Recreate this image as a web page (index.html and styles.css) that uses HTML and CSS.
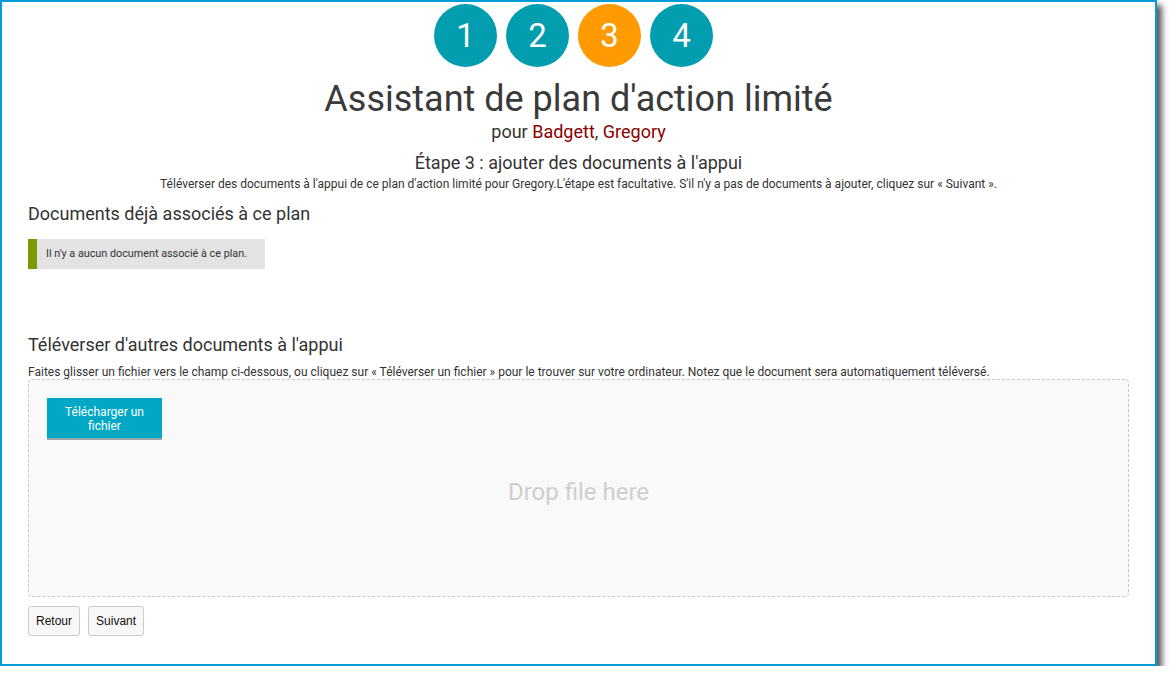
FILE: index.html
```html
<!DOCTYPE html>
<html lang="fr">
<head>
<meta charset="utf-8">
<link rel="stylesheet" href="styles.css">
</head>
<body>
<div class="frame">
  <div class="steps">
    <div class="step">1</div>
    <div class="step">2</div>
    <div class="step current">3</div>
    <div class="step">4</div>
  </div>
  <h1 class="title">Assistant de plan d'action limité</h1>
  <div class="for">pour <span class="name">Badgett</span>, <span class="name">Gregory</span></div>
  <h2 class="stage">Étape 3 : ajouter des documents à l'appui</h2>
  <p class="stage-desc">Téléverser des documents à l'appui de ce plan d'action limité pour Gregory.L'étape est facultative. S'il n'y a pas de documents à ajouter, cliquez sur « Suivant ».</p>

  <div class="content">
    <h3 class="section-title">Documents déjà associés à ce plan</h3>
    <div class="notice">Il n'y a aucun document associé à ce plan.</div>

    <h3 class="section-title upload-title">Téléverser d'autres documents à l'appui</h3>
    <p class="hint">Faites glisser un fichier vers le champ ci-dessous, ou cliquez sur « Téléverser un fichier » pour le trouver sur votre ordinateur. Notez que le document sera automatiquement téléversé.</p>
    <div class="dropzone">
      <button class="upload-btn">Télécharger un fichier</button>
      <div class="drop-text">Drop file here</div>
    </div>
    <div class="nav">
      <button class="nav-btn">Retour</button>
      <button class="nav-btn">Suivant</button>
    </div>
  </div>
</div>
</body>
</html>
```

FILE: styles.css
```css
html, body {
  margin: 0;
  padding: 0;
  background: #fff;
}
body {
  font-family: Roboto, "Liberation Sans", Arial, sans-serif;
  color: #333;
}
.frame {
  box-sizing: border-box;
  width: 1157px;
  height: 666px;
  border: 2px solid #049dd9;
  background: #fff;
  box-shadow: 5px 5px 6px rgba(0,0,0,0.65);
  padding-top: 2px;
}
.steps {
  display: flex;
  justify-content: center;
  gap: 9px;
  margin-left: -10px;
}
.step {
  width: 63px;
  height: 63px;
  border-radius: 50%;
  background: #029daf;
  color: #fff;
  font-size: 33px;
  line-height: 63px;
  text-align: center;
}
.step.current {
  background: #ff9a00;
}
.title {
  margin: 11px 0 0;
  font-size: 36px;
  font-weight: 400;
  line-height: 42px;
  text-align: center;
  color: #3a3a3a;
}
.for {
  text-align: center;
  font-size: 18px;
  line-height: 22px;
  color: #333;
  margin-top: 1px;
}
.name {
  color: #8b0000;
}
.stage {
  margin: 9px 0 0;
  font-size: 18px;
  font-weight: 400;
  line-height: 22px;
  text-align: center;
  color: #333;
}
.stage-desc {
  margin: 3px 0 0;
  font-size: 12px;
  line-height: 14px;
  text-align: center;
  color: #333;
}
.content {
  padding: 0 26px;
}
.section-title {
  margin: 11px 0 0;
  font-size: 18px;
  font-weight: 400;
  line-height: 24px;
  color: #333;
}
.notice {
  margin-top: 13px;
  height: 30px;
  background: #e3e3e3;
  border-left: 9px solid #7a9a01;
  font-size: 10.8px;
  line-height: 30px;
  padding-left: 9px;
  box-sizing: content-box;
  width: 219px;
  color: #333;
}
.upload-title {
  margin-top: 64px;
}
.hint {
  margin: 8px 0 0;
  font-size: 12px;
  line-height: 14px;
  color: #333;
}
.dropzone {
  box-sizing: border-box;
  margin-top: 0;
  height: 218px;
  border: 1px dashed #c8c8c8;
  border-radius: 4px;
  background: #f9f9f9;
  padding: 18px 18px 0;
  display: flex;
  flex-direction: column;
  align-items: flex-start;
}
.upload-btn {
  width: 115px;
  height: 42px;
  background: #00a8c6;
  color: #fff;
  border: 0;
  border-bottom: 2px solid #9aa6a8;
  font-family: Roboto, "Liberation Sans", Arial, sans-serif;
  font-size: 12px;
  line-height: 14px;
  padding: 2px 10px 0;
}
.drop-text {
  align-self: stretch;
  text-align: center;
  margin-top: 38px;
  font-size: 24px;
  color: #cfcfcf;
}
.nav {
  display: flex;
  gap: 8px;
  margin-top: 9px;
}
.nav-btn {
  height: 30px;
  padding: 0 7px;
  background: #f7f7f7;
  border: 1px solid #cccccc;
  border-radius: 3px;
  font-family: "Liberation Sans", Arial, sans-serif;
  font-size: 12px;
  color: #111;
}
```
